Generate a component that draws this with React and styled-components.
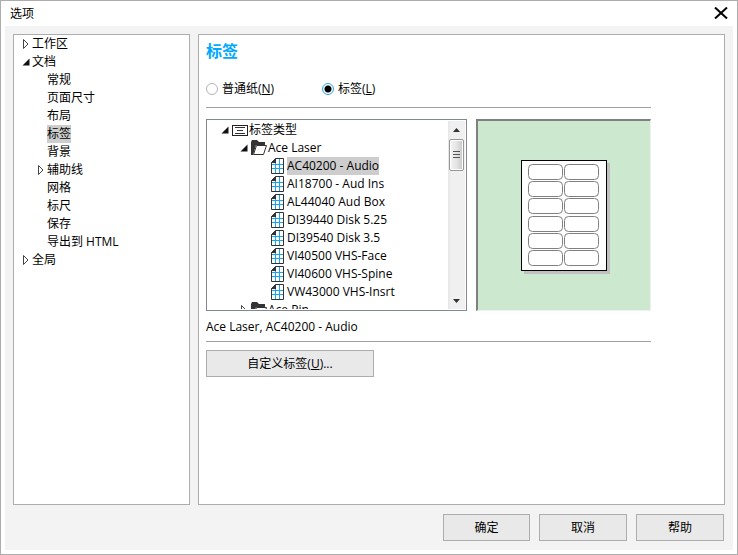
import React, { useState } from "react";
import styled, { createGlobalStyle } from "styled-components";

const GlobalStyle = createGlobalStyle`
* {
box-sizing: border-box;
}
body {
margin:0;
background-color:#fff;
color:#000;
font-family: "Open Sans", "Noto Sans CJK SC", sans-serif;
font-size:12px;
line-height:18px;
}
button, input {
font: inherit;
color: inherit;
}
`;

//Window
const Window = styled.div`
display:flex;
flex-direction: column;
min-height:100vh;
padding:0 4px 4px;
border:1px solid #adadad;
background-color:#fff;
`;
const TitleBar = styled.header`
display:flex;
align-items: center;
justify-content: space-between;
height:25px;
padding:0 5px;
`;
const WindowTitle = styled.h1`
margin:0;
font-size:12px;
font-weight:400;
`;
const CloseButton = styled.button`
display:flex;
padding:0 0 2px;
border:0;
background:none;
`;
const Body = styled.div`
flex:1;
display:flex;
flex-direction: column;
gap:9px;
padding:8px 8px 9px;
background-color:#f3f3f3;
`;
const Columns = styled.div`
flex:1;
display:grid;
grid-template-columns:177px minmax(0, 1fr);
gap:8px;
`;

//Trees
const NavPanel = styled.nav`
padding-left:8px;
border:1px solid #adadad;
background-color:#fff;
`;
const Tree = styled.ul`
margin:0;
padding:0;
list-style:none;
`;
const TreeRow = styled.li`
display:flex;
align-items: center;
height:18px;
padding-left:${props => props.$indent}px;
white-space: nowrap;
`;
const ArrowSlot = styled.span`
display:flex;
flex:none;
width:${props => props.$width || 10}px;
`;
const IconSlot = styled.span`
display:flex;
flex:none;
width:${props => props.$width}px;
`;
const TreeLabel = styled.button`
height:18px;
padding:0;
border:0;
line-height:18px;
background-color:${props => props.$selected ? "#cdcdcd" : "transparent"};
`;

//Page
const Page = styled.main`
padding:6px 73px 7px 7px;
border:1px solid #adadad;
background-color:#fff;
`;
const PageTitle = styled.h2`
margin:0;
color:#00a8ff;
font-size:16px;
font-weight:700;
line-height:20px;
`;
const RadioRow = styled.div`
display:flex;
margin-top:19px;
padding-bottom:9px;
border-bottom:1px solid #a0a0a0;
`;
const RadioLabel = styled.label`
display:flex;
align-items: center;
gap:4px;
min-width:116px;
`;
const Radio = styled.input`
appearance:none;
width:12px;
height:12px;
margin:0;
border:1px solid #b4b4b4;
border-radius:50%;
background-color:#fff;
&:checked {
border-color:#2ba6e6;
background-image: radial-gradient(circle, #000 3px, transparent 4px);
}
`;
const Chooser = styled.div`
display:grid;
grid-template-columns:minmax(0, 1fr) 175px;
gap:9px;
height:192px;
margin-top:11px;
`;
const ListBox = styled.div`
display:flex;
min-height:0;
padding:1px;
border:1px solid #828790;
`;
const ListContent = styled.div`
flex:1;
overflow:hidden;
padding-left:13px;
`;
const ScrollBar = styled.div`
display:flex;
flex-direction: column;
width:17px;
background: linear-gradient(to right, #e6e6e6, #f0f0f0 3px, #f0f0f0);
`;
const ScrollButton = styled.button`
display:flex;
align-items: center;
justify-content: center;
height:17px;
padding:0;
border:0;
background:none;
`;
const ScrollThumb = styled.div`
display:flex;
align-items: center;
justify-content: center;
height:32px;
margin:1px 1px auto;
border:1px solid #979797;
border-radius:2px;
box-shadow: inset 0 0 0 1px #fff;
background: linear-gradient(to right, #f4f4f4, #e4e4e4 50%, #c8c8c8);
`;
const Preview = styled.div`
display:flex;
align-items: center;
justify-content: center;
padding:3px 0 0 3px;
border:1px solid #f0f0f0;
border-top:2px solid #808080;
border-left:2px solid #808080;
background-color:#cce8cf;
`;
const Status = styled.p`
margin:0;
padding:7px 0 5px;
border-bottom:1px solid #a0a0a0;
`;
const Button = styled.button`
width:${props => props.$width || 88}px;
height:27px;
padding:0;
border:1px solid #adadad;
background-color:#e9e9e9;
`;
const PageAction = styled.div`
display:flex;
margin-top:8px;
`;
const Footer = styled.footer`
display:flex;
justify-content: flex-end;
gap:9px;
padding-right:1px;
`;

//Icons
function Arrow({ open }) {
    return open ? (
        <svg width="8" height="8" viewBox="0 0 8 8" aria-hidden="true">
            <path d="M7.5 0.5V7.5H0.5Z" fill="#111" />
        </svg>
    ) : (
        <svg width="8" height="10" viewBox="0 0 8 10" aria-hidden="true">
            <path d="M1.5 0.5V9.5L6 5Z" fill="#fff" stroke="#444" />
        </svg>
    );
}

function TypeIcon() {
    return (
        <svg width="16" height="11" viewBox="0 0 16 11" aria-hidden="true">
            <rect x="0.5" y="0.5" width="15" height="10" fill="#fff" stroke="#222" />
            <path d="M3 2.5H13M5 5.5H11M3 8.5H13" stroke="#333" />
        </svg>
    );
}

function FolderIcon() {
    return (
        <svg width="17" height="16" viewBox="0 0 17 16" aria-hidden="true">
            <path d="M0 15V2L1 0H6L8 2H14V5H5L2 15Z" fill="#333" />
            <path d="M5.5 5.5H15.5L12.5 14.5H2.5Z" fill="#fff" stroke="#333" />
        </svg>
    );
}

function SheetIcon() {
    return (
        <svg width="13" height="16" viewBox="0 0 13 16" aria-hidden="true">
            <path d="M0.5 4.5L4.5 0.5H12.5V15.5H0.5Z" fill="#fff" />
            <path d="M4.5 1V15M8.5 1V15M1 6.5H12M1 10.5H12" stroke="#19a4ec" />
            <path d="M0.5 4.5L4.5 0.5H12.5V15.5H0.5Z" fill="none" stroke="#333" />
            <path d="M0 5L5 0V5Z" fill="#333" />
        </svg>
    );
}

function LabelSheet() {
    const rows = [4, 21, 38, 56, 73, 90];
    return (
        <svg width="89" height="114" viewBox="0 0 89 114" role="img" aria-label="Ace Laser, AC40200 - Audio">
            <rect x="3" y="3" width="86" height="111" fill="#c0c0c0" />
            <rect x="0.5" y="0.5" width="85" height="110" fill="#fff" stroke="#000" />
            {rows.map(y => (
                <g key={y} fill="none" stroke="#808080">
                    <rect x="7.5" y={y + 0.5} width="34" height="15" rx="4" />
                    <rect x="43.5" y={y + 0.5} width="34" height="15" rx="4" />
                </g>
            ))}
        </svg>
    );
}

const sections = [
    { name: "工作区", indent: 0, arrow: "closed" },
    { name: "文档", indent: 0, arrow: "open" },
    { name: "常规", indent: 15 },
    { name: "页面尺寸", indent: 15 },
    { name: "布局", indent: 15 },
    { name: "标签", indent: 15 },
    { name: "背景", indent: 15 },
    { name: "辅助线", indent: 15, arrow: "closed" },
    { name: "网格", indent: 15 },
    { name: "标尺", indent: 15 },
    { name: "保存", indent: 15 },
    { name: "导出到 HTML", indent: 15 },
    { name: "全局", indent: 0, arrow: "closed" },
];

const labels = [
    "AC40200 - Audio",
    "AI18700 - Aud Ins",
    "AL44040 Aud Box",
    "DI39440 Disk 5.25",
    "DI39540 Disk 3.5",
    "VI40500 VHS-Face",
    "VI40600 VHS-Spine",
    "VW43000 VHS-Insrt",
];

function Navigation() {
    const [section, setSection] = useState("标签");
    return (
        <NavPanel>
            <Tree>
                {sections.map(item => (
                    <TreeRow key={item.name} $indent={item.indent}>
                        <ArrowSlot>{item.arrow && <Arrow open={item.arrow === "open"} />}</ArrowSlot>
                        <TreeLabel $selected={item.name === section} onClick={() => setSection(item.name)}>
                            {item.name}
                        </TreeLabel>
                    </TreeRow>
                ))}
            </Tree>
        </NavPanel>
    );
}

function LabelList({ label, onSelect }) {
    return (
        <ListBox>
            <ListContent>
                <Tree>
                    <TreeRow $indent={0}>
                        <ArrowSlot $width={11}><Arrow open /></ArrowSlot>
                        <IconSlot $width={17}><TypeIcon /></IconSlot>
                        <TreeLabel>标签类型</TreeLabel>
                    </TreeRow>
                    <TreeRow $indent={19}>
                        <ArrowSlot $width={11}><Arrow open /></ArrowSlot>
                        <IconSlot $width={17}><FolderIcon /></IconSlot>
                        <TreeLabel>Ace Laser</TreeLabel>
                    </TreeRow>
                    {labels.map(name => (
                        <TreeRow key={name} $indent={50}>
                            <IconSlot $width={16}><SheetIcon /></IconSlot>
                            <TreeLabel $selected={name === label} onClick={() => onSelect(name)}>{name}</TreeLabel>
                        </TreeRow>
                    ))}
                    <TreeRow $indent={19}>
                        <ArrowSlot $width={11}><Arrow /></ArrowSlot>
                        <IconSlot $width={17}><FolderIcon /></IconSlot>
                        <TreeLabel>Ace Pin</TreeLabel>
                    </TreeRow>
                </Tree>
            </ListContent>
            <ScrollBar>
                <ScrollButton aria-label="向上">
                    <svg width="7" height="4" viewBox="0 0 7 4"><path d="M0 4L3.5 0L7 4Z" fill="#333" /></svg>
                </ScrollButton>
                <ScrollThumb>
                    <svg width="7" height="8" viewBox="0 0 7 8"><path d="M0 0.5H7M0 3.5H7M0 6.5H7" stroke="#555" /></svg>
                </ScrollThumb>
                <ScrollButton aria-label="向下">
                    <svg width="7" height="4" viewBox="0 0 7 4"><path d="M0 0H7L3.5 4Z" fill="#333" /></svg>
                </ScrollButton>
            </ScrollBar>
        </ListBox>
    );
}

function App() {
    const [paper, setPaper] = useState("labels");
    const [label, setLabel] = useState(labels[0]);
    return (
        <Window>
            <GlobalStyle />
            <TitleBar>
                <WindowTitle>选项</WindowTitle>
                <CloseButton aria-label="关闭">
                    <svg width="14" height="12" viewBox="0 0 14 12">
                        <path d="M1 0.5L13 11.5M13 0.5L1 11.5" stroke="#000" strokeWidth="2" />
                    </svg>
                </CloseButton>
            </TitleBar>
            <Body>
                <Columns>
                    <Navigation />
                    <Page>
                        <PageTitle>标签</PageTitle>
                        <RadioRow>
                            <RadioLabel>
                                <Radio type="radio" name="paper" checked={paper === "plain"} onChange={() => setPaper("plain")} />
                                <span>普通纸(<u>N</u>)</span>
                            </RadioLabel>
                            <RadioLabel>
                                <Radio type="radio" name="paper" checked={paper === "labels"} onChange={() => setPaper("labels")} />
                                <span>标签(<u>L</u>)</span>
                            </RadioLabel>
                        </RadioRow>
                        <Chooser>
                            <LabelList label={label} onSelect={setLabel} />
                            <Preview><LabelSheet /></Preview>
                        </Chooser>
                        <Status>Ace Laser, {label}</Status>
                        <PageAction>
                            <Button $width={168}>自定义标签(<u>U</u>)...</Button>
                        </PageAction>
                    </Page>
                </Columns>
                <Footer>
                    <Button $width={87}>确定</Button>
                    <Button>取消</Button>
                    <Button>帮助</Button>
                </Footer>
            </Body>
        </Window>
    );
}

export default App;
